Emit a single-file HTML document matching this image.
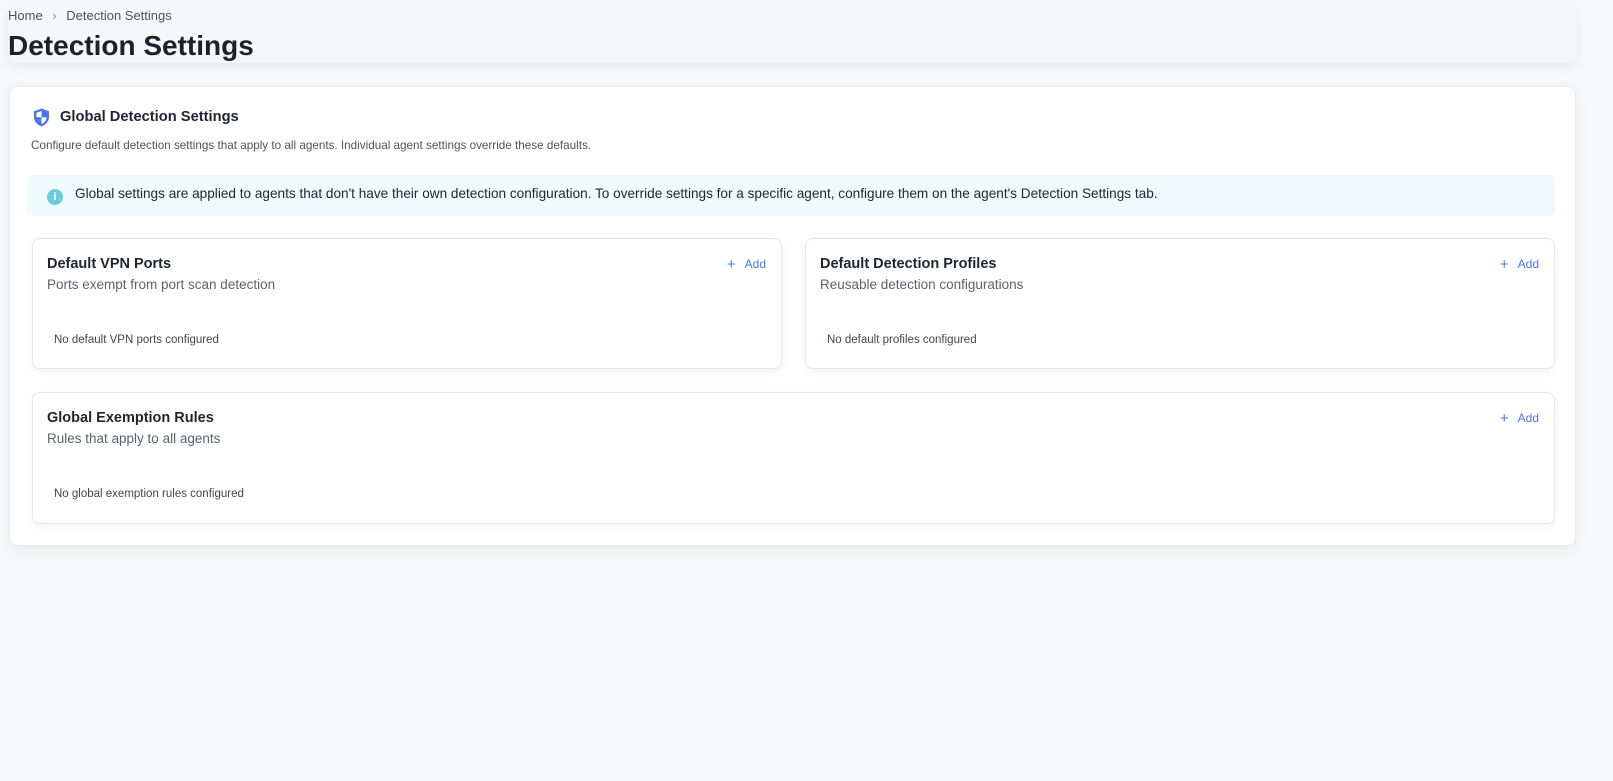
<!DOCTYPE html>
<html><head><meta charset="utf-8"><style>
*{box-sizing:border-box;margin:0;padding:0}
body{width:1613px;height:781px;background:#f7f8fa;font-family:"Liberation Sans",sans-serif;position:relative;overflow:hidden;color:#1f2430}
.abs{position:absolute}
.hdr{left:8px;top:6px;width:1569px;height:57px;background:#f6f7f9;border-radius:8px;box-shadow:0 4px 10px rgba(0,0,0,0.06)}
.main{left:9px;top:86px;width:1567px;height:460px;background:#fff;border:1px solid #e8eaed;border-radius:8px;box-shadow:0 4px 14px rgba(0,0,0,0.06)}
.card{background:#fff;border:1px solid #e4e6ea;border-radius:8px;box-shadow:0 3px 8px rgba(0,0,0,0.05)}
.ct{font-size:14.5px;font-weight:bold;color:#1f2430;position:absolute;left:14px;top:17px}
.cs{font-size:13.5px;color:#5b6270;position:absolute;left:14px;top:38px}
.ce{font-size:11.5px;color:#3f4552;position:absolute;left:21px;top:95px}
.add{position:absolute;right:15px;top:16px;font-size:12px;color:#4a76e8}
.add b{font-weight:normal;font-size:15px;margin-right:9px;position:relative;top:1px}
</style></head><body>
<div class="abs hdr"></div>
<div class="abs" style="left:8px;top:8px;font-size:13px;color:#4d5360">Home <span style="margin:0 6px;color:#8a909a">›</span> Detection Settings</div>
<div class="abs" style="left:8px;top:30px;font-size:28px;font-weight:bold;color:#1c212b">Detection Settings</div>
<div class="abs main"></div>
<svg class="abs" style="left:33px;top:108px" width="17" height="19" viewBox="0 0 17 19"><path d="M8.5 0.5 L16 3.3 V9 C16 13.5 12.8 16.8 8.5 18.5 C4.2 16.8 1 13.5 1 9 V3.3 Z" fill="#4a76e8"/><path d="M8.5 3 V9.2 H3.5 V4.8 Z M8.5 9.2 H13.5 C13.3 12.5 11.3 14.8 8.5 16 Z" fill="#fff"/></svg>
<div class="abs" style="left:60px;top:109px;font-size:14.7px;font-weight:bold;color:#1f2430">Global Detection Settings</div>
<div class="abs" style="left:31px;top:139px;font-size:11.7px;color:#4d5360">Configure default detection settings that apply to all agents. Individual agent settings override these defaults.</div>
<div class="abs" style="left:27px;top:175px;width:1528px;height:41px;background:#f0f9fb;border-radius:6px"></div>
<div class="abs" style="left:47px;top:189px;width:16px;height:16px;border-radius:50%;background:#6ccbd9;color:#fff;font-size:11px;font-weight:bold;text-align:center;line-height:16px">i</div>
<div class="abs" style="left:75px;top:186px;font-size:13.6px;color:#222733">Global settings are applied to agents that don't have their own detection configuration. To override settings for a specific agent, configure them on the agent's Detection Settings tab.</div>
<div class="abs card" style="left:32px;top:238px;width:750px;height:131px">
<div class="ct">Default VPN Ports</div><div class="cs">Ports exempt from port scan detection</div><div class="add"><b>+</b>Add</div><div class="ce">No default VPN ports configured</div></div>
<div class="abs card" style="left:805px;top:238px;width:750px;height:131px">
<div class="ct">Default Detection Profiles</div><div class="cs">Reusable detection configurations</div><div class="add"><b>+</b>Add</div><div class="ce">No default profiles configured</div></div>
<div class="abs card" style="left:32px;top:392px;width:1523px;height:132px">
<div class="ct">Global Exemption Rules</div><div class="cs">Rules that apply to all agents</div><div class="add"><b>+</b>Add</div><div class="ce">No global exemption rules configured</div></div>
</body></html>
